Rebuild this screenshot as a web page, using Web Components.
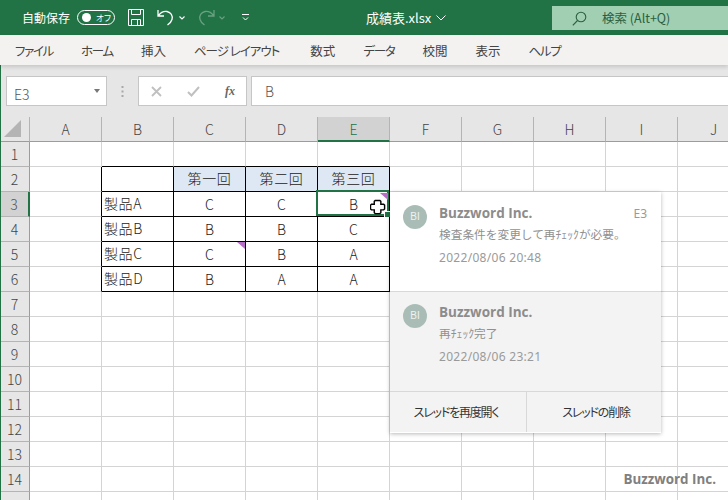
<!DOCTYPE html>
<html lang="ja"><head><meta charset="utf-8"><title>成績表</title>
<style>
html,body{margin:0;padding:0;height:500px;overflow:hidden;background:#fff}
body{font-family:"Noto Sans CJK JP","Noto Sans",sans-serif}
</style></head><body>
<x-app>
  <x-titlebar slot="top"></x-titlebar>
  <x-tabs slot="top"></x-tabs>
  <x-formula slot="top"></x-formula>
  <x-sheet></x-sheet>
  <x-thread slot="over">
    <x-comment author="Buzzword Inc." time="2022/08/06 20:48" cell="E3">検査条件を変更して再ﾁｪｯｸが必要。</x-comment>
    <x-comment alt author="Buzzword Inc." time="2022/08/06 23:21">再ﾁｪｯｸ完了</x-comment>
  </x-thread>
  <x-mark slot="over">Buzzword Inc.</x-mark>
</x-app>
<script>
function def(name,html,init){
  customElements.define(name,class extends HTMLElement{
    constructor(){super();this.attachShadow({mode:'open'}).innerHTML=html;}
    connectedCallback(){if(init)init(this,this.shadowRoot);}
  });
}
const CJK='"Noto Sans CJK JP","Noto Sans",sans-serif';
def('x-app',`<style>
:host{display:block;position:relative;width:728px;height:500px;overflow:hidden;background:#fff}
.edge{position:absolute;left:0;top:0;bottom:0;width:1px;background:#217346}
</style><slot name="top"></slot><slot></slot><slot name="over"></slot><div class="edge"></div>`);

def('x-titlebar',`<style>
:host{display:flex;align-items:center;height:35px;background:#217346;color:#fff;font:12px ${CJK};box-sizing:border-box;position:relative}
.auto{margin-left:22px;width:48px;white-space:nowrap}
.tog{margin-left:7px;width:38px;height:15px;box-sizing:border-box;border:1px solid #fff;border-radius:8px;display:flex;align-items:center;padding:0 0 0 4px;gap:5px;font-size:8.500px;line-height:1;font-feature-settings:"palt"}
.tog i{width:9px;height:9px;border-radius:50%;background:#fff;flex:none}
svg{display:block;flex:none}
.title{position:absolute;left:366px;top:9px;font-size:13px;line-height:18px;white-space:nowrap;display:flex;align-items:center;gap:5px;font-feature-settings:"palt"}
.search{position:absolute;left:552px;top:6px;right:0;height:24px;background:#a0cfb1;color:#2c5f41;display:flex;align-items:center;font-size:12.500px}
.search svg{margin-left:20px}.search span{margin-left:15px;padding-bottom:2px}
</style>
<span class="auto">自動保存</span>
<span class="tog"><i></i><span>オフ</span></span>
<svg style="margin-left:13px" width="16" height="17" viewBox="0 0 16 17" fill="none" stroke="#fff" stroke-width="1"><path d="M.5.5h15v16H.5zM3.5.5v5h9v-5M3.5 16.500v-6h9v6M9.500 11v5"/></svg>
<svg style="margin-left:13px" width="17" height="18" viewBox="0 0 17 18" fill="none" stroke="#fff" stroke-width="1.300"><path d="M1 1v6h6M1.500 6.500C4 3 7 2 10 2.500c4 1 6 4 5 8-.6 2.400-2.500 4-4.500 5.500"/></svg>
<svg style="margin-left:5px" width="6" height="4" viewBox="0 0 6 4" fill="none" stroke="#fff" stroke-width="1.100"><path d="M.5.500 3 3 5.500.500"/></svg>
<svg style="margin-left:13px;opacity:.32" width="17" height="18" viewBox="0 0 17 18" fill="none" stroke="#fff" stroke-width="1.300"><path d="M16 1v6h-6M15.500 6.500C13 3 10 2 7 2.500c-4 1-6 4-5 8 .6 2.400 2.500 4 4.500 5.500"/></svg>
<svg style="margin-left:4px;opacity:.32" width="6" height="4" viewBox="0 0 6 4" fill="none" stroke="#fff" stroke-width="1.100"><path d="M.5.500 3 3 5.500.500"/></svg>
<svg style="margin-left:17px" width="7" height="7" viewBox="0 0 7 7" fill="none" stroke="#fff" stroke-width="1"><path d="M0 .5h7M1 3.500 3.500 6 6 3.500"/></svg>
<div class="title"><span>成績表.xlsx</span><svg width="10" height="6" viewBox="0 0 10 6" fill="none" stroke="#fff" stroke-width="1"><path d="M.5.500 5 5 9.500.500"/></svg></div>
<div class="search"><svg width="15" height="15" viewBox="0 0 15 15" fill="none" stroke="#2c5f41" stroke-width="1.100"><circle cx="9" cy="6" r="4.800"/><path d="M5.500 9.500.8 14.300"/></svg><span>検索 (Alt+Q)</span></div>`);

def('x-tabs',`<style>
:host{display:flex;align-items:center;height:30px;background:#f3f2f1;color:#444;font:12.500px ${CJK};font-feature-settings:"palt";padding-left:15px;gap:28px;box-shadow:0 2px 4px rgba(0,0,0,.14);position:relative;z-index:1;white-space:nowrap}
.k{letter-spacing:-1.300px}.p{letter-spacing:-1px;margin-right:3px}
</style>
<span class="k">ファイル</span><span class="k">ホーム</span><span>挿入</span><span class="p">ページ レイアウト</span><span>数式</span><span class="k">データ</span><span>校閲</span><span>表示</span><span class="k">ヘルプ</span>`);

def('x-formula',`<style>
:host{display:flex;align-items:center;height:52px;box-sizing:border-box;padding:11px 0 11px 6px;background:#e6e6e6;color:#555;font:300 14px ${CJK}}
.b{height:30px;box-sizing:border-box;background:#fff;border:1px solid #c6c6c6;display:flex;align-items:center}
.name{width:101px;padding:0 6px 0 7px;justify-content:space-between}
.name span{padding-top:5px}
.tri{width:0;height:0;border:3.500px solid transparent;border-top:4px solid #777;border-bottom:0}
.dots{width:31px;display:flex;justify-content:center}
.fx{width:109px;justify-content:space-between;padding:0 11px 0 12px}
.fx em{font:italic 700 12px "Liberation Serif",serif;color:#666}
.val{flex:1;margin-left:4px;border-right:0;padding-left:13px}
</style>
<div class="b name"><span>E3</span><i class="tri"></i></div>
<div class="dots"><svg width="3" height="11" viewBox="0 0 3 11" fill="#a8a8a8"><rect x="0.500" width="2" height="2"/><rect x="0.500" y="4.500" width="2" height="2"/><rect x="0.500" y="9" width="2" height="2"/></svg></div>
<div class="b fx"><svg width="11" height="11" viewBox="0 0 11 11" fill="none" stroke="#c0c0c0" stroke-width="1.800"><path d="M1 1l9 9M10 1l-9 9"/></svg><svg width="13" height="11" viewBox="0 0 13 11" fill="none" stroke="#c0c0c0" stroke-width="2"><path d="M1 6l3.500 3.500L12 1"/></svg><em>fx</em></div>
<div class="b val">B</div>`);

const COLS=['A','B','C','D','E','F','G','H','I','J'];
const DATA={2:{C:'第一回',D:'第二回',E:'第三回'},3:{B:'製品A',C:'C',D:'C',E:'B'},4:{B:'製品B',C:'B',D:'B',E:'C'},5:{B:'製品C',C:'C',D:'B',E:'A'},6:{B:'製品D',C:'B',D:'A',E:'A'}};
def('x-sheet',`<style>
:host{display:block;height:383px;overflow:hidden;font:300 14px ${CJK};color:#222}
.g{display:grid;grid-template-columns:30px repeat(10,72px);grid-auto-rows:25px}
.g>div{box-sizing:border-box;position:relative;border-right:1px solid #d4d4d4;border-bottom:1px solid #d4d4d4;display:flex;align-items:center;justify-content:center;white-space:nowrap}
.g>.h{background:#e6e6e6;border-right-color:#b4b4b4;border-bottom-color:#9c9c9c;color:#444}
.g>.r{background:#e6e6e6;border-right-color:#9c9c9c;border-bottom-color:#b4b4b4;color:#444}
.g>.hs{background:#d2d2d2;color:#217346;border-bottom:2px solid #217346}
.g>.rs{background:#d2d2d2;border-right:2px solid #217346;color:#555}
.g>.br{border-right-color:#000}.g>.bb{border-bottom-color:#000}
.g>.fill{background:#dde8f4}
.g>.l{justify-content:flex-start;padding-left:2px}
.ja{letter-spacing:.6px;padding-bottom:2px}
.ci{position:absolute;right:0;top:0;width:0;height:0;border-top:7px solid #b56fc6;border-left:8px solid transparent;z-index:3}
.ci.e{right:1px;top:1px}
.sel{position:absolute;left:-2px;top:-2px;width:73px;height:26px;box-sizing:border-box;border:2px solid #217346}
.hd{position:absolute;right:-3px;bottom:-3px;width:5px;height:5px;background:#217346;outline:1px solid #fff}
.cur{position:absolute;left:52px;top:7px;z-index:2}
svg{display:block}
</style><div class="g"></div>`,(el,sr)=>{
  const g=sr.querySelector('.g');let h='<div class="h"><svg width="18" height="18" viewBox="0 0 18 18" style="margin:-1px 0 0 -3px"><path d="M17 0V17H0Z" fill="#b4b4b4"/></svg></div>';
  for(const c of COLS)h+=`<div class="h ${c==='E'?'hs':''}">${c}</div>`;
  for(let r=1;r<=14;r++){
    h+=`<div class="r ${r===3?'rs':''}">${r}</div>`;
    for(const c of COLS){
      const inT=r>=2&&r<=6&&'BCDE'.includes(c);
      const cl=[];
      if(inT||(c==='A'&&r>=2&&r<=6))cl.push('br');
      if(inT||(r===1&&'BCDE'.includes(c)))cl.push('bb');
      const t=(DATA[r]&&DATA[r][c])||'';
      if(r===2&&inT&&c!=='B')cl.push('fill');
      if(c==='B'&&t)cl.push('l');
      let inner=t?(/[^A-Z]/.test(t)?`<span class="ja">${t}</span>`:`<span>${t}</span>`):'';
      if(c==='C'&&r===5)inner+='<i class="ci"></i>';
      if(c==='E'&&r===3)inner+=`<i class="ci e"></i><div class="sel"><i class="hd"></i></div>
      <svg class="cur" width="16" height="16" viewBox="0 0 16 16"><path d="M5 1h5l1 1v3h3l1 1v4l-1 1h-3v3l-1 1H5l-1-1v-3H1L0 10V6l1-1h3V2z" fill="#fff" stroke="#000" stroke-width="1.500" transform="translate(.5 .5) scale(.94)"/></svg>`;
      h+=`<div class="${cl.join(' ')}">${inner}</div>`;
    }
  }
  h+='<div class="r"></div>'+COLS.map(()=>'<div></div>').join('');
  g.innerHTML=h;
});

def('x-thread',`<style>
:host{position:absolute;left:390px;top:192px;width:271px;height:241px;display:flex;flex-direction:column;background:#fff;box-shadow:0 1px 4px rgba(0,0,0,.28);font:12px ${CJK}}
.foot{display:flex;height:41px;background:#f3f3f3;border-top:1px solid #d8d8d8;color:#333;box-sizing:border-box;font-feature-settings:"palt"}
.foot span{flex:1;display:flex;align-items:center;justify-content:center;font-size:12px;letter-spacing:-1.200px;padding:0 0 2px 4px}
.foot span:first-child{flex:0 0 137px;border-right:1px solid #d8d8d8;box-sizing:border-box;padding:0 4px 2px 0}
</style><slot></slot><div class="foot"><span>スレッドを再度開く</span><span>スレッドの削除</span></div>`);

def('x-comment',`<style>
:host{display:flex;box-sizing:border-box;height:100px;padding:13px 13px 0;gap:12px;background:#fff;border-bottom:1px solid #d8d8d8;position:relative;color:#909090}
:host([alt]){height:99px;background:#f3f3f3;border-bottom:0;padding-top:12px}
.av{width:24px;height:24px;border-radius:50%;background:#a9bdb6;color:#eef3f1;font:10px/24px "Liberation Sans",sans-serif;text-align:center;flex:none}
.c{display:flex;flex-direction:column;min-width:0}
.n{font:700 13.500px/17px "Open Sans","Noto Sans",sans-serif;color:#8c8c8c}
.t{font:11.700px/17px ${CJK};margin-top:3px;white-space:nowrap}
.d{font:12px/17px "Noto Sans",sans-serif;margin-top:7px;color:#9a9a9a;letter-spacing:.3px}
.e{position:absolute;right:14px;top:13px;font:12px/17px "Noto Sans",sans-serif;color:#9a9a9a}
</style><div class="av">BI</div><div class="c"><div class="n"></div><div class="t"><slot></slot></div><div class="d"></div></div><span class="e"></span>`,(el,sr)=>{
  sr.querySelector('.n').textContent=el.getAttribute('author');
  sr.querySelector('.d').textContent=el.getAttribute('time');
  sr.querySelector('.e').textContent=el.getAttribute('cell')||'';
});

def('x-mark',`<style>
:host{position:absolute;right:12px;top:470px;font:700 13.400px/18px "Open Sans","Noto Sans",sans-serif;color:#808080}
</style><slot></slot>`);
</script>
</body></html>
